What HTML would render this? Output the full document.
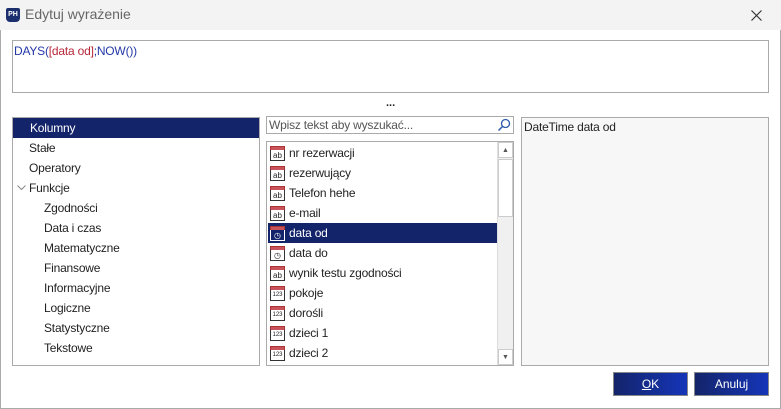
<!DOCTYPE html>
<html><head><meta charset="utf-8"><style>
*{box-sizing:border-box;margin:0;padding:0}
body{width:781px;height:409px;overflow:hidden;background:#fff;font-family:"Liberation Sans",sans-serif;font-size:12px;color:#222;position:relative}
.win{position:absolute;left:0;top:0;width:781px;height:409px;border:1px solid #aaa;border-top:none}
.title{position:absolute;left:0;top:0;width:781px;height:30px;background:#f3f3f3}
.abs{position:absolute}
.box{position:absolute;border:1px solid #aaa;background:#fff}
.it{position:absolute;height:20px;line-height:20px;white-space:nowrap;letter-spacing:-0.2px}
.sel{background:#14246a;color:#fff}
.ic{position:absolute;width:15px;height:15px;border:1px solid #333;background:#fff;font-size:8px;line-height:9px;text-align:center;color:#222}
.ic:before{content:"";position:absolute;left:-1px;right:-1px;top:-1px;height:3px;background:#c9535b;border:1px solid #a33;border-bottom:none}
.ic span{position:absolute;left:0;right:0;bottom:0}
.btn{position:absolute;height:24px;border:1px solid #888;background:linear-gradient(90deg,#14246a,#1535b8);color:#fff;text-align:center;line-height:22px;font-size:12px}
</style></head><body>
<div class="win"></div>
<div class="title"></div>
<div class="abs" style="left:6px;top:8px;width:14px;height:14px;background:#1b2f6e;border-radius:2px 2px 4px 4px;color:#fff;font-size:7px;font-weight:bold;line-height:14px;text-align:center">PH</div>
<div class="abs" style="left:25px;top:6px;font-size:14px;color:#666">Edytuj wyrażenie</div>
<svg class="abs" style="left:751px;top:10px" width="11" height="11"><path d="M0.5 0.5L10.5 10.5M10.5 0.5L0.5 10.5" stroke="#333" stroke-width="1.2"/></svg>

<div class="box" style="left:12px;top:40px;width:757px;height:53px"><div style="padding:3px 0 0 1px;color:#2438a8;letter-spacing:-0.2px">DAYS(<span style="color:#b8283a">[data od]</span>;NOW())</div></div>
<div class="abs" style="left:386px;top:97px;font-weight:bold;font-size:11px">...</div>

<div class="box" style="left:12px;top:117px;width:248px;height:249px">
<div class="it sel" style="left:0;top:0;width:246px;padding-left:17px">Kolumny</div>
<div class="it" style="left:16px;top:20px">Stałe</div>
<div class="it" style="left:16px;top:40px">Operatory</div>
<svg class="abs" style="left:4px;top:67px" width="9" height="6"><path d="M0.5 0.5L4.5 4.5L8.5 0.5" fill="none" stroke="#888"/></svg>
<div class="it" style="left:16px;top:60px">Funkcje</div>
<div class="it" style="left:31px;top:80px">Zgodności</div>
<div class="it" style="left:31px;top:100px">Data i czas</div>
<div class="it" style="left:31px;top:120px">Matematyczne</div>
<div class="it" style="left:31px;top:140px">Finansowe</div>
<div class="it" style="left:31px;top:160px">Informacyjne</div>
<div class="it" style="left:31px;top:180px">Logiczne</div>
<div class="it" style="left:31px;top:200px">Statystyczne</div>
<div class="it" style="left:31px;top:220px">Tekstowe</div>
</div>

<div class="box" style="left:266px;top:116px;width:248px;height:18px"><div style="padding:1px 0 0 2px;color:#555;letter-spacing:-0.2px">Wpisz tekst aby wyszukać...</div>
<svg class="abs" style="left:230px;top:1px" width="14" height="14"><circle cx="8.5" cy="5.5" r="4" fill="none" stroke="#2c5aa8" stroke-width="1.3"/><line x1="5.5" y1="8.5" x2="1.5" y2="12.5" stroke="#2c5aa8" stroke-width="1.5"/></svg></div>

<div class="box" style="left:266px;top:141px;width:248px;height:225px">
<div class="abs" style="left:230px;top:0;width:16px;height:223px;background:#f0f0f0;border-left:1px solid #ddd"></div>
<div class="abs" style="left:231px;top:0;width:15px;height:16px;background:#fff;border:1px solid #ccc;font-size:7px;text-align:center;line-height:15px;color:#555">▲</div>
<div class="abs" style="left:231px;top:17px;width:15px;height:58px;background:#fff;border:1px solid #ccc"></div>
<div class="abs" style="left:231px;top:207px;width:15px;height:16px;background:#fff;border:1px solid #ccc;font-size:7px;text-align:center;line-height:15px;color:#555">▼</div>
<div class="it sel" style="left:1px;top:81px;width:229px"></div>
<div class="ic" style="left:3px;top:4px"><span>ab</span></div><div class="it" style="left:22px;top:1px">nr rezerwacji</div>
<div class="ic" style="left:3px;top:24px"><span>ab</span></div><div class="it" style="left:22px;top:21px">rezerwujący</div>
<div class="ic" style="left:3px;top:44px"><span>ab</span></div><div class="it" style="left:22px;top:41px">Telefon hehe</div>
<div class="ic" style="left:3px;top:64px"><span>ab</span></div><div class="it" style="left:22px;top:61px">e-mail</div>
<div class="ic" style="left:3px;top:84px;border-color:#fff;background:#14246a"><span style="color:#fff">◷</span></div><div class="it" style="left:22px;top:81px;color:#fff">data od</div>
<div class="ic" style="left:3px;top:104px"><span>◷</span></div><div class="it" style="left:22px;top:101px">data do</div>
<div class="ic" style="left:3px;top:124px"><span>ab</span></div><div class="it" style="left:22px;top:121px">wynik testu zgodności</div>
<div class="ic" style="left:3px;top:144px"><span style="font-size:6px">123</span></div><div class="it" style="left:22px;top:141px">pokoje</div>
<div class="ic" style="left:3px;top:164px"><span style="font-size:6px">123</span></div><div class="it" style="left:22px;top:161px">dorośli</div>
<div class="ic" style="left:3px;top:184px"><span style="font-size:6px">123</span></div><div class="it" style="left:22px;top:181px">dzieci 1</div>
<div class="ic" style="left:3px;top:204px"><span style="font-size:6px">123</span></div><div class="it" style="left:22px;top:201px">dzieci 2</div>
</div>

<div class="box" style="left:521px;top:117px;width:248px;height:249px;background:#f7f7f7"><div style="padding:2px 0 0 2px;letter-spacing:-0.2px">DateTime data od</div></div>

<div class="btn" style="left:613px;top:372px;width:75px"><u>O</u>K</div>
<div class="btn" style="left:694px;top:372px;width:75px">Anuluj</div>
</body></html>
